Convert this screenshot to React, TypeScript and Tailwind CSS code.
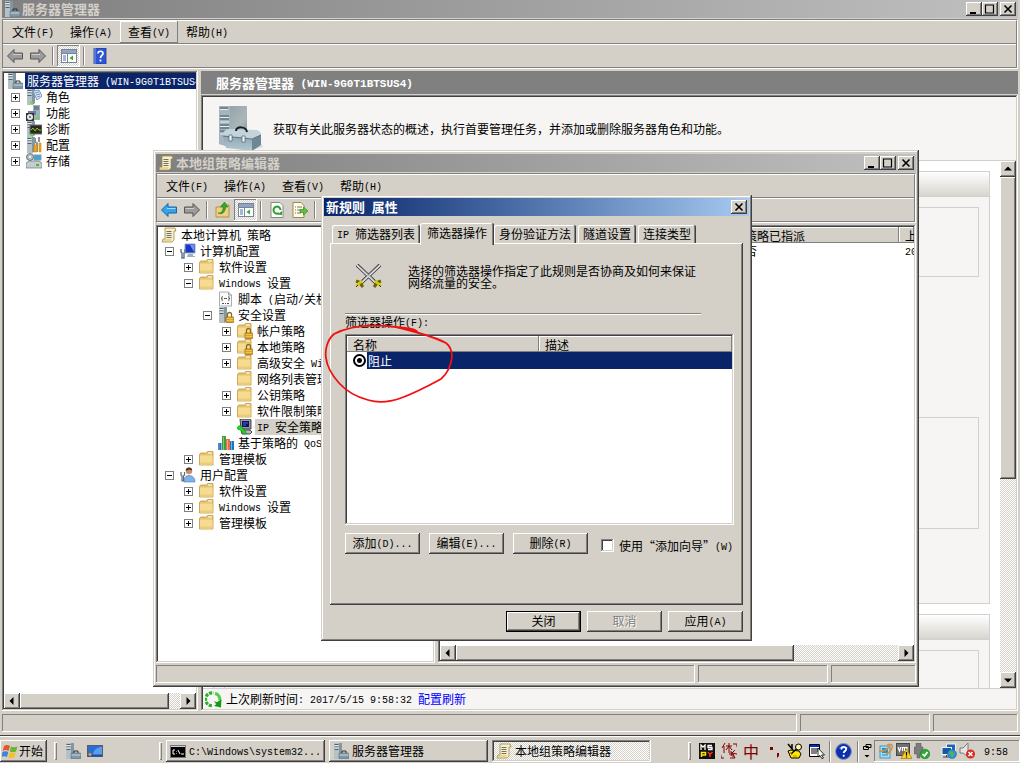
import type { ComponentType, ReactNode } from "react"
import { clsx } from "clsx"

const RAISED =
  "bg-[#d4d0c8] shadow-[inset_-1px_-1px_#404040,inset_1px_1px_#fff,inset_-2px_-2px_#808080]"
const FRAME =
  "bg-[#d4d0c8] shadow-[inset_-1px_-1px_#404040,inset_1px_1px_#d4d0c8,inset_-2px_-2px_#808080,inset_2px_2px_#fff]"
const SUNKEN =
  "p-[2px] shadow-[inset_-1px_-1px_#fff,inset_1px_1px_#808080,inset_-2px_-2px_#d4d0c8,inset_2px_2px_#404040]"
const THIN_SUNKEN = "shadow-[inset_-1px_-1px_#fff,inset_1px_1px_#808080]"
const DITHER =
  "bg-[repeating-conic-gradient(#fff_0_25%,#d4d0c8_0_50%)] bg-[length:2px_2px]"

// Half-width characters take exactly half the advance of the Chinese ones.
function Txt({ children, bold }: { children: string; bold?: boolean }) {
  return (
    <span className={clsx("whitespace-pre", bold && "text-[13px] font-bold")}>
      {children.split(/([\x20-\x7e]+)/).map((part, i) =>
        i % 2 ? (
          <span
            key={i}
            className={clsx(
              "align-[1px] leading-none font-['Liberation_Mono',monospace]",
              bold ? "text-[11px]" : "text-[10px]"
            )}
          >
            {part}
          </span>
        ) : (
          part
        )
      )}
    </span>
  )
}

/* ---------- icons ---------- */

function Svg({
  children,
  size = "size-4",
  box = "0 0 16 16",
}: {
  children: ReactNode
  size?: string
  box?: string
}) {
  return (
    <svg viewBox={box} className={clsx("shrink-0", size)} aria-hidden="true">
      {children}
    </svg>
  )
}

function Tower() {
  return (
    <>
      <path d="M1 0h8v14l-3 2H1z" fill="#b4c2c8" />
      <path d="M6 0h3v14l-3 2z" fill="#8497a0" />
      <path d="M1.500 1.500h4M1.500 4h4M1.500 6.500h4" stroke="#4c616b" />
      <path d="M1.500 2.500h4M1.500 5h4" stroke="#e4ecef" />
    </>
  )
}

function ServerIcon() {
  return (
    <Svg>
      <Tower />
      <rect x="6" y="10" width="10" height="6" rx="1" fill="#7f97a6" stroke="#566c79" strokeWidth=".6" />
      <path d="M6.500 12h9" stroke="#c9d8e0" />
      <path d="M9 10V8h4v2" fill="none" stroke="#333" />
    </Svg>
  )
}

function RolesIcon() {
  return (
    <Svg>
      <Tower />
      <rect x="4" y="12.500" width="3" height="2" fill="#5be22a" />
      <path d="M7 2l6-1 3 6-5 4z" fill="#dbe9f7" stroke="#7793b5" />
      <path d="M9 4l4-1M10 6l4-1M11 8l3-1" stroke="#6f93c4" />
    </Svg>
  )
}

function FeaturesIcon() {
  return (
    <Svg>
      <path d="M7 0h7v15H7z" fill="#9fb1ba" />
      <path d="M8 2h5M8 4h5" stroke="#3f525c" />
      <path d="M2 6h8v4H2z" fill="#6c7da8" />
      <rect x="0" y="8" width="8" height="8" fill="#333" />
      <circle cx="4" cy="12" r="3" fill="#e8e8e8" />
      <circle cx="4" cy="12" r="1" fill="#555" />
      <rect x="10" y="12" width="3" height="2" fill="#5be22a" />
    </Svg>
  )
}

function DiagnosticsIcon() {
  return (
    <Svg>
      <Tower />
      <rect x="4" y="4" width="12" height="9" fill="#2a2a20" stroke="#777" />
      <path d="M5 9l2-2 2 3 2-3 2 2h2" fill="none" stroke="#8ac926" />
      <rect x="4" y="13" width="3" height="2" fill="#5be22a" />
    </Svg>
  )
}

function ConfigIcon() {
  return (
    <Svg>
      <Tower />
      <path d="M9 1v4l2 1v9M13 0v5" stroke="#8d9499" strokeWidth="2" fill="none" />
      <path d="M8 8h3v7H8zM13 6h2v9h-2z" fill="#f3a712" stroke="#b9770a" strokeWidth=".5" />
    </Svg>
  )
}

function StorageIcon() {
  return (
    <Svg>
      <circle cx="4" cy="4" r="3.500" fill="#b4bcc0" stroke="#6b7478" />
      <circle cx="4" cy="4" r="1" fill="#fff" />
      <rect x="8" y="2" width="7" height="5" fill="#39a7d8" stroke="#8a979d" />
      <path d="M0 10l3-2h10l3 2v5H0z" fill="#c4ccd0" stroke="#6b7478" strokeWidth=".7" />
      <rect x="10" y="11" width="3" height="2" fill="#35c41a" />
    </Svg>
  )
}

function ScrollIcon() {
  return (
    <Svg>
      <path d="M4 1h10l1 3h-2v9l-2 2H1l1-3h2z" fill="#fbf0c4" stroke="#a08a4a" strokeWidth=".8" />
      <path d="M5.500 4.500h5M5.500 6.500h5M5.500 8.500h5M5.500 10.500h5" stroke="#6d6d80" />
      <path d="M1.500 13h9" stroke="#d6b65a" />
    </Svg>
  )
}

function FolderIcon({ lock }: { lock?: boolean }) {
  return (
    <Svg>
      <path d="M.5 3.500l1-1.500h6l1-1.500h5.500V14H.5z" fill="#e6c268" stroke="#c09a48" strokeWidth=".8" />
      <path d="M9 2h4" stroke="#fff" />
      <path d="M1 4.500h12.500v9H1z" fill="#f6dc92" />
      <path d="M1 11.500h12.500v2H1z" fill="#edcb78" />
      {lock && <Padlock />}
    </Svg>
  )
}

function Padlock() {
  return (
    <>
      <path d="M9.500 10V7.500a2 2 0 0 1 4 0V10" fill="none" stroke="#8a6c1c" strokeWidth="1.300" />
      <rect x="8" y="10" width="7.500" height="5.500" fill="#dfa520" stroke="#94690e" strokeWidth=".7" />
      <path d="M8.500 11.500h7M8.500 13.500h7" stroke="#f6d066" strokeWidth=".7" />
    </>
  )
}

function ComputerIcon() {
  return (
    <Svg>
      <path d="M5 1h10v9H5z" fill="#1737c8" stroke="#9aa6b8" />
      <path d="M10 2h4v7z" fill="#6e93f0" />
      <path d="M8 11h5v2h2v1H7z" fill="#a7adb5" />
      <path d="M1 6v3l1 1v5h2v-5l1-1V6" fill="none" stroke="#60788f" strokeWidth="1.500" />
    </Svg>
  )
}

function UserIcon() {
  return (
    <Svg>
      <circle cx="9" cy="4" r="3.200" fill="#c98f6a" />
      <path d="M5.800 4a3.200 3.200 0 0 1 6.400-.5L9 2.500z" fill="#4a3524" />
      <path d="M4 15c0-5 2-6.500 5-6.500s6 1.500 6 6.500z" fill="#7fb0e6" stroke="#4f7fb5" strokeWidth=".6" />
      <path d="M1 5v3l1 1v5h1.500V9l1-1V5" fill="none" stroke="#5a6b80" strokeWidth="1.200" />
    </Svg>
  )
}

function ScriptIcon() {
  return (
    <Svg>
      <path d="M1.500 1h9l3 3v11h-12z" fill="#fafafa" stroke="#999" strokeWidth=".8" />
      <path d="M10.500 1v3h3" fill="none" stroke="#999" />
      <path d="M4.500 5.500H4v2H3h1v2h.5M10.500 5.500h.5v2h1-1v2h-.5M6 7.500h3M4 12.500h2M7 12.500h1M9 12.500h2" fill="none" stroke="#555" />
    </Svg>
  )
}

function SecurityIcon() {
  return (
    <Svg>
      <Tower />
      <Padlock />
    </Svg>
  )
}

function IpSecIcon() {
  return (
    <Svg>
      <path d="M3 0h9l2 1v9H4z" fill="#9a9a9a" stroke="#222" strokeWidth=".8" />
      <rect x="5" y="2" width="7" height="6" fill="#10105c" />
      <path d="M6 4h5M6 6h3" stroke="#3a6df0" />
      <path d="M4 11h9l2 2-2 2H5z" fill="#b8b8b8" stroke="#222" strokeWidth=".8" />
      <path d="M0 8.500L2.500 6.500 4.500 8 9 13v2H7L3 10.500 1.500 11z" fill="#14e014" stroke="#067806" strokeWidth=".5" />
    </Svg>
  )
}

function QosIcon() {
  return (
    <Svg>
      <path d="M0 8h3.500v7H0z" fill="#1f6fc0" />
      <path d="M4 1h4v14H4z" fill="#3f9e35" />
      <path d="M8 4h4v11H8z" fill="#ee6e4c" />
      <path d="M12 6h4v9h-4z" fill="#1a79bd" />
      <path d="M1 8v7M5.500 2v13M9.500 5v10M13.500 6v9" stroke="#ffffff66" />
    </Svg>
  )
}

function ArrowIcon({ blue, flip }: { blue?: boolean; flip?: boolean }) {
  return (
    <Svg>
      <path
        d={flip ? "M15.500 8L9 1.500V5H.5v6H9v3.500z" : "M.5 8L7 1.500V5h8.500v6H7v3.500z"}
        fill={blue ? "#35a4ea" : "#9b9b9b"}
        stroke={blue ? "#1565a8" : "#555"}
      />
      <path
        d={flip ? "M1.500 6.500H10" : "M6 6.500h8.500"}
        stroke={blue ? "#a4dcff" : "#cfcfcf"}
      />
    </Svg>
  )
}

function PanelIcon() {
  return (
    <Svg>
      <rect x=".5" y="1.500" width="15" height="13" fill="#fff" stroke="#7a8494" />
      <path d="M1 2h14v3H1z" fill="#8fa4c4" />
      <path d="M1 5.500h14M6.500 6v8" stroke="#7a8494" />
      <path d="M2 8h3M2 10h3M2 12h3" stroke="#4a6fb0" />
      <path d="M12 7.500v5L8.500 10z" fill="#2fae2f" />
    </Svg>
  )
}

function HelpBookIcon() {
  return (
    <Svg>
      <path d="M2 0h12v16H2z" fill="#2d55d4" stroke="#1c3796" strokeWidth=".8" />
      <path d="M3 0v16" stroke="#7f9cf2" />
      <path d="M6 5.500C6 2.500 11 2.500 11 5.500 11 7.500 8.500 7.500 8.500 10M8.500 11.500v2" fill="none" stroke="#fff" strokeWidth="1.700" />
    </Svg>
  )
}

function UpFolderIcon() {
  return (
    <Svg>
      <path d="M1 5h5l1-2h7v12H1z" fill="#f0cf7d" stroke="#a8843a" strokeWidth=".8" />
      <path d="M3 11c4 0 5-2 5-6H5.500L9.500 0 13 5h-2.500c0 5-3 8-7.500 6z" fill="#35a82b" stroke="#1c6b17" strokeWidth=".5" />
    </Svg>
  )
}

function RefreshPageIcon() {
  return (
    <Svg>
      <path d="M2 .5h9l3 3v12H2z" fill="#fff" stroke="#888" />
      <path d="M11.500 8A3.500 3.500 0 1 0 10 11" fill="none" stroke="#2da02d" strokeWidth="2" />
      <path d="M8.500 12.500l4.500.5v-4z" fill="#2da02d" />
    </Svg>
  )
}

function ExportIcon() {
  return (
    <Svg>
      <path d="M1 .5h8l3 3v12H1z" fill="#fffbe6" stroke="#9a8a55" />
      <path d="M3 5h1M5 5h5M3 8h1M5 8h4M3 11h1M5 11h4" stroke="#777" />
      <path d="M8 7.500h3.500V5L16 9l-4.500 4v-2.500H8z" fill="#58c43c" stroke="#2a8418" strokeWidth=".6" />
    </Svg>
  )
}

function RefreshIcon() {
  return (
    <Svg size="size-[17px]">
      <path d="M9.500 2.200A6 6 0 0 1 13.900 9" fill="none" stroke="#4fcf4a" strokeWidth="3" />
      <path d="M6.500 13.800A6 6 0 1 1 8 2" fill="none" stroke="#2eaf2a" strokeWidth="3" strokeDasharray="3 1" />
      <path d="M8.500 9.500l2.500 1 4.500-2.500-.5 7.500L8.500 14l2-1.500z" fill="#119b14" />
    </Svg>
  )
}

function ToolboxServerIcon() {
  return (
    <Svg size="w-[46px] h-[46px]" box="0 0 46 46">
      <defs>
        <linearGradient id="tower" x1="0" x2="1" y2="1">
          <stop offset="0" stopColor="#8c9ba1" />
          <stop offset=".6" stopColor="#a9b7bb" />
          <stop offset="1" stopColor="#6f828a" />
        </linearGradient>
        <linearGradient id="front" y2="1" x2="0">
          <stop offset="0" stopColor="#8ea6b4" />
          <stop offset="1" stopColor="#b4c8d2" />
        </linearGradient>
      </defs>
      <ellipse cx="36" cy="41" rx="9" ry="3" fill="#dcdcdc" />
      <path d="M1 1h28v40l-14 2-14-4z" fill="url(#tower)" />
      <path d="M1 1h11v41L1 39z" fill="#a4b5bd" />
      <path d="M2 3h8M2 11h9M2 14h9M2 20h9M2 23h9M2 26h9" stroke="#40545e" />
      <path d="M2 4.500h8M2 12.500h9M2 17h9M2 21.500h9M2 29h9" stroke="#e6eef0" />
      <path d="M5 31l29 3v12L8 43z" fill="url(#front)" />
      <path d="M34 34l9-4v10l-9 6z" fill="#6e8795" />
      <path d="M5 31c0-4 2-7 6-7l26 1c4 0 6 2 6 5l-9 4z" fill="#c2d3db" />
      <path d="M5 31l29 3 9-4" fill="none" stroke="#5c727f" />
      <path d="M18 26c0-5 10-5 11 1" fill="none" stroke="#1c1c1c" strokeWidth="2" />
      <path d="M11 30h3v6h-3zM24 31h3v6h-3z" fill="#f2f5f6" stroke="#3d4f58" strokeWidth=".6" />
    </Svg>
  )
}

function SwordsIcon() {
  return (
    <Svg size="w-[27px] h-6" box="0 0 27 24">
      <path d="M2 1l19 18M25 1L6 19" stroke="#222" strokeWidth="3.600" />
      <path d="M2 1l19 18M25 1L6 19" stroke="#e2e2e2" strokeWidth="2.200" />
      <path d="M3 1l18 17M24 1L6 18" stroke="#777" strokeWidth=".7" />
      <path d="M1 17l3 1 4 5M26 17l-3 1-4 5" fill="none" stroke="#6b6400" strokeWidth="3" />
      <path d="M1 22l6-5M26 22l-6-5" stroke="#d6ca00" strokeWidth="2.600" />
      <path d="M1 23l2-2M26 23l-2-2" stroke="#333" />
    </Svg>
  )
}

function WindowsFlag() {
  return (
    <Svg>
      <path d="M2 3c2-1.500 4-1.500 6 0L6.500 8C5 6.800 3 6.800.8 8z" fill="#e8542a" />
      <path d="M9 3.500c2 1 4 1 6.500 0L14 8.500c-2 1-4.500 1-6.200 0z" fill="#69b52d" />
      <path d="M.5 9C3 7.800 5 8 6.300 9L5 14c-2-1.200-4-1-5.500 0z" fill="#3f84dc" />
      <path d="M7.500 9.500c2 1 4 1 6.200 0l-1.500 5c-2 1-4 1-6 0z" fill="#f8c022" />
    </Svg>
  )
}

function DesktopIcon() {
  return (
    <Svg>
      <rect x=".5" y="2.500" width="15" height="11" fill="#2a6fd0" stroke="#5b5b66" />
      <path d="M6 11c1-5 5-7 9-7v9H6z" fill="#5b9ef0" />
      <rect x="1" y="11.500" width="14" height="2" fill="#1c4ea8" />
      <circle cx="3" cy="11.500" r="1.500" fill="#f0a030" />
    </Svg>
  )
}

function ConsoleIcon() {
  return (
    <Svg>
      <rect x=".5" y="2.500" width="15" height="12" fill="#000" stroke="#777" />
      <path d="M1 3.500h14" stroke="#c8d0dc" />
      <path d="M5 7H3v4h2M6.500 8v.5M6.500 10.500v.5M8 7l2 4M11 11h3" fill="none" stroke="#fff" />
    </Svg>
  )
}

function MspyIcon() {
  return (
    <Svg>
      <rect width="16" height="16" fill="#111" />
      <path d="M2 7V2l2 2 2-2v5M13 2.500H9v2h4v2H9" fill="none" stroke="#fff" strokeWidth="1.300" />
      <path d="M2.500 14V9.500h4v2.500h-4" fill="none" stroke="#ffe800" strokeWidth="1.500" />
      <path d="M9 9l2 2.500L13.500 9M11 11.500V14" fill="none" stroke="#ff3020" strokeWidth="1.500" />
    </Svg>
  )
}

function PaintIcon() {
  return (
    <Svg>
      <path d="M1 1l5 6M5 1v5" stroke="#000" strokeWidth="1.500" />
      <path d="M1 8l3-1 8 1 2 3-2 4H4z" fill="#ffe800" stroke="#000" />
      <circle cx="11.500" cy="4" r="3" fill="#fff6b0" stroke="#000" />
      <path d="M9.500 6L4 11" stroke="#000" strokeWidth="1.500" />
      <path d="M6 13h4M3 9l2 3" stroke="#e07818" />
    </Svg>
  )
}

function MenuCursorIcon() {
  return (
    <Svg>
      <path d="M.5 1.500h10v12H.5z" fill="#fff" stroke="#000" />
      <path d="M1 3h9" stroke="#0028d8" strokeWidth="2" />
      <path d="M2 6h7M2 8h7M2 10h6" stroke="#000" />
      <path d="M9 5l6.500 7h-3l2 3-1.500.8-2-3.300L9 14z" fill="#fff" stroke="#000" strokeWidth=".8" />
    </Svg>
  )
}

function HelpBallIcon() {
  return (
    <Svg size="size-[17px]">
      <circle cx="8" cy="8" r="7.500" fill="#0c2fae" stroke="#8a96b8" />
      <path d="M3 5a6 4 0 0 1 10 0z" fill="#6a8cf0" />
      <path d="M6 6c0-3 4.500-3 4.500-.2C10.500 7.500 8.200 7.500 8.200 9.500M8.200 11v2" fill="none" stroke="#fff" strokeWidth="1.700" />
    </Svg>
  )
}

function GlobeFlagIcon() {
  return (
    <Svg>
      <rect x="2" y="3" width="10" height="12" fill="#a9dcf2" stroke="#3c9cc4" />
      <path d="M4 5h6v5H4z" fill="#1d94d0" />
      <path d="M4 12h6" stroke="#2b86b4" />
      <path d="M1 8c3 1 8-1 10-4M9 2c4-2 6 0 5 3-1 4-3 5-6 6" fill="none" stroke="#e58a32" strokeWidth="1.500" />
    </Svg>
  )
}

function VmIcon() {
  return (
    <Svg>
      <rect x=".5" y=".5" width="13" height="12" fill="#707070" stroke="#444" />
      <path d="M2 4l1.500 4L5 4M6.500 8V4.500h2V8M8.500 4.500h2.500V8" fill="none" stroke="#fff" strokeWidth="1.200" />
      <path d="M10.500 6l5.500 9.500H5z" fill="#ffd21c" stroke="#a67800" strokeWidth=".7" />
      <path d="M10.500 9v3.500M10.500 13.500v1" stroke="#000" strokeWidth="1.300" />
    </Svg>
  )
}

function SafeRemoveIcon() {
  return (
    <Svg>
      <path d="M2 0h5v4h2v7H6v4H3v-4H0V4h2z" fill="#7c7c7c" stroke="#555" strokeWidth=".5" />
      <circle cx="11" cy="11" r="4.800" fill="#2fa836" stroke="#16701b" strokeWidth=".5" />
      <path d="M8.500 11l2 2 3-4" fill="none" stroke="#fff" strokeWidth="1.700" />
    </Svg>
  )
}

function NetworkIcon() {
  return (
    <Svg>
      <rect x="5.500" y="1" width="9" height="7" fill="#1c66b8" stroke="#eef2f6" />
      <rect x="1" y="4.500" width="9.500" height="7" fill="#155a9f" stroke="#eef2f6" />
      <path d="M2 14h7M5.500 12v2" stroke="#444" />
      <circle cx="11" cy="11" r="4.500" fill="#2f8fe0" stroke="#1b5c98" strokeWidth=".5" />
      <path d="M9 8l3 1 1 3-2 3-1-3-2-2z" fill="#56b83c" />
    </Svg>
  )
}

function MutedIcon() {
  return (
    <Svg>
      <path d="M1 5h3l5-5v14l-5-4H1z" fill="#e4e4e4" stroke="#666" strokeWidth=".8" />
      <circle cx="11.500" cy="11" r="4.500" fill="#d92b22" />
      <path d="M9.500 9l4 4M13.500 9l-4 4" stroke="#fff" strokeWidth="1.500" />
    </Svg>
  )
}

/* ---------- shared window parts ---------- */

function CaptionButton({ kind }: { kind: "min" | "max" | "close" }) {
  const label = { min: "最小化", max: "最大化", close: "关闭窗口" }[kind]
  return (
    <button type="button" aria-label={label} className={clsx("h-[14px] w-4", RAISED)}>
      <svg viewBox="0 0 16 14" className="block h-[14px] w-4" aria-hidden="true">
        {kind === "min" && <path d="M4 11h6" stroke="#000" strokeWidth="2" />}
        {kind === "max" && (
          <path d="M3.500 3h8v8h-8zM3 3h9" fill="none" stroke="#000" strokeWidth="1.200" />
        )}
        {kind === "close" && (
          <path d="M4.500 3.500l7 7M11.500 3.500l-7 7" stroke="#000" strokeWidth="1.600" />
        )}
      </svg>
    </button>
  )
}

function TitleBar({
  title,
  icon,
  active,
}: {
  title: string
  icon?: ReactNode
  active?: boolean
}) {
  return (
    <div
      className={clsx(
        "flex h-[18px] shrink-0 items-center gap-[2px] bg-linear-to-r px-[2px]",
        active
          ? "from-[#0a246a] to-[#a6caf0] text-white"
          : "from-[#808080] to-[#c0c0c0] text-[#d4d0c8]"
      )}
    >
      {icon}
      <h2 className="flex-1">
        <Txt bold>{title}</Txt>
      </h2>
      <div className="flex">
        {!active && (
          <>
            <CaptionButton kind="min" />
            <CaptionButton kind="max" />
          </>
        )}
      </div>
      <CaptionButton kind="close" />
    </div>
  )
}

const MENUS = ["文件(F)", "操作(A)", "查看(V)", "帮助(H)"]

function MenuBar({ hot }: { hot?: string }) {
  return (
    <nav className="flex h-[23px] items-stretch border-b border-[#808080] pl-px">
      {MENUS.map((menu) => (
        <button
          key={menu}
          type="button"
          className={clsx(
            "w-[58px] shrink-0",
            menu === hot && "shadow-[inset_-1px_-1px_#808080,inset_1px_1px_#fff]"
          )}
        >
          <Txt>{menu}</Txt>
        </button>
      ))}
    </nav>
  )
}

function ToolButton({
  label,
  pressed,
  children,
}: {
  label: string
  pressed?: boolean
  children: ReactNode
}) {
  return (
    <button
      type="button"
      aria-label={label}
      className={clsx(
        "flex h-[22px] w-[23px] shrink-0 items-center justify-center",
        pressed && [DITHER, THIN_SUNKEN]
      )}
    >
      {children}
    </button>
  )
}

function ToolDivider() {
  return (
    <span className="mx-[3px] h-[18px] w-[2px] border-r border-l border-r-white border-l-[#808080]" />
  )
}

function Bars({ children }: { children: ReactNode }) {
  return (
    <div className="mt-px shrink-0 border border-[#808080] border-r-white border-b-white">
      <div className="border-t border-r border-b border-[#808080] border-t-white">
        {children}
      </div>
    </div>
  )
}

function ScrollArrow({ dir }: { dir: "left" | "right" | "up" | "down" }) {
  const paths = {
    left: "M9.500 4v8l-4-4z",
    right: "M6.500 4v8l4-4z",
    up: "M4 9.500h8l-4-4z",
    down: "M4 6.500h8l-4 4z",
  }
  const labels = { left: "向左", right: "向右", up: "向上", down: "向下" }
  return (
    <button type="button" aria-label={labels[dir]} className={clsx("size-4 shrink-0", RAISED)}>
      <Svg>
        <path d={paths[dir]} fill="#000" />
      </Svg>
    </button>
  )
}

function StatusBar() {
  return (
    <footer className="flex h-[18px] shrink-0 gap-[3px]">
      <div className={clsx("flex-1", THIN_SUNKEN)} />
      <div className={clsx("w-[130px]", THIN_SUNKEN)} />
      <div className={clsx("w-[85px]", THIN_SUNKEN)} />
    </footer>
  )
}

type TreeItem = {
  label: string
  icon: ComponentType
  level: 0 | 1 | 2 | 3 | 4
  state?: "open" | "closed"
  selected?: "active" | "inactive"
}

const INDENT = ["pl-[3px]", "pl-[7px]", "pl-[26px]", "pl-[45px]", "pl-[64px]"]

function Tree({ items }: { items: TreeItem[] }) {
  return (
    <ul className="flex flex-col">
      {items.map((item, i) => (
        <li key={i} className={clsx("flex h-4 items-center", INDENT[item.level])}>
          {item.level > 0 && (
            <span className="mr-[6px] size-[9px] shrink-0">
              {item.state && (
                <Svg size="block size-[9px]" box="0 0 9 9">
                  <rect x=".5" y=".5" width="8" height="8" fill="#fff" stroke="#808080" />
                  <path
                    d={item.state === "open" ? "M2 4.500h5" : "M2 4.500h5M4.500 2v5"}
                    stroke="#000"
                  />
                </Svg>
              )}
            </span>
          )}
          <item.icon />
          <span
            className={clsx(
              "ml-[2px] h-4 shrink-0 px-[2px] leading-4",
              item.selected === "active" && "bg-[#0a246a] text-white",
              item.selected === "inactive" && "bg-[#d4d0c8]"
            )}
          >
            <Txt>{item.label}</Txt>
          </span>
        </li>
      ))}
    </ul>
  )
}

/* ---------- server manager ---------- */

const SERVER_TREE: TreeItem[] = [
  { label: "服务器管理器 (WIN-9G0T1BTSUS4)", icon: ServerIcon, level: 0, selected: "active" },
  { label: "角色", icon: RolesIcon, level: 1, state: "closed" },
  { label: "功能", icon: FeaturesIcon, level: 1, state: "closed" },
  { label: "诊断", icon: DiagnosticsIcon, level: 1, state: "closed" },
  { label: "配置", icon: ConfigIcon, level: 1, state: "closed" },
  { label: "存储", icon: StorageIcon, level: 1, state: "closed" },
]

function SummaryCard({ boxes }: { boxes: string[] }) {
  return (
    <section className="shrink-0 border border-[#d0d0d0] bg-[#f6f5f4]">
      <div className="h-[25px] border-b border-[#d0d0d0] bg-linear-to-b from-white to-[#d8d5ce]" />
      <div className="flex flex-col px-[10px] pt-[10px]">
        {boxes.map((box) => (
          <div key={box} className={clsx("border border-[#d0d0d0]", box)} />
        ))}
      </div>
    </section>
  )
}

function ServerManager() {
  return (
    <section className="flex min-h-0 flex-1 flex-col border-b border-[#404040] bg-[#d4d0c8] px-[2px] pb-[3px]">
      <TitleBar title="服务器管理器" icon={<ServerIcon />} />
      <Bars>
        <MenuBar hot="查看(V)" />
        <div className="flex h-[23px] items-center border-t border-white">
          <ToolButton label="后退">
            <ArrowIcon />
          </ToolButton>
          <ToolButton label="前进">
            <ArrowIcon flip />
          </ToolButton>
          <ToolDivider />
          <ToolButton label="显示控制台树" pressed>
            <PanelIcon />
          </ToolButton>
          <ToolDivider />
          <ToolButton label="帮助">
            <HelpBookIcon />
          </ToolButton>
        </div>
      </Bars>
      <div className="mt-[2px] flex min-h-0 flex-1 gap-[3px]">
        <div className={clsx("flex w-[196px] shrink-0 flex-col bg-white", SUNKEN)}>
          <div className="min-h-0 flex-1 overflow-hidden">
            <Tree items={SERVER_TREE} />
          </div>
          <div className={clsx("flex h-4 shrink-0", DITHER)}>
            <ScrollArrow dir="left" />
            <div className={clsx("h-4 w-[149px]", RAISED)} />
            <span className="flex-1" />
            <ScrollArrow dir="right" />
          </div>
        </div>
        <div className="flex min-w-0 flex-1 flex-col">
          <h1 className="flex h-[23px] shrink-0 items-center bg-[#808080] pl-[15px] text-white">
            <Txt bold>服务器管理器 (WIN-9G0T1BTSUS4)</Txt>
          </h1>
          <div className={clsx("mt-px flex min-h-0 flex-1 flex-col bg-[#f6f5f4]", SUNKEN)}>
            <div className="flex h-[64px] shrink-0 items-start gap-[9px] border-b border-[#d0d0d0] pt-[8px] pl-[15px]">
              <ToolboxServerIcon />
              <p className="pt-[16px] leading-4">
                <Txt>获取有关此服务器状态的概述，执行首要管理任务，并添加或删除服务器角色和功能。</Txt>
              </p>
            </div>
            <div className="flex min-h-0 flex-1 bg-white">
              <div className="flex min-w-0 flex-1 flex-col gap-[10px] overflow-hidden px-[10px] pt-[10px]">
                <SummaryCard boxes={["h-[70px]", "mt-[140px] mb-[74px] h-[112px]"]} />
                <SummaryCard boxes={["h-[70px]"]} />
              </div>
              <div className={clsx("flex w-4 shrink-0 flex-col", DITHER)}>
                <ScrollArrow dir="up" />
                <div className={clsx("h-[302px]", RAISED)} />
                <span className="flex-1" />
                <ScrollArrow dir="down" />
              </div>
            </div>
            <div className="flex h-[21px] shrink-0 items-center gap-1 border-t border-[#d0d0d0] pl-[2px]">
              <RefreshIcon />
              <p>
                <Txt>上次刷新时间: 2017/5/15 9:58:32 </Txt>
                <a href="#refresh" className="text-[#0000ff]">
                  <Txt>配置刷新</Txt>
                </a>
              </p>
            </div>
          </div>
        </div>
      </div>
      <div className="mt-[3px]">
        <StatusBar />
      </div>
    </section>
  )
}

/* ---------- group policy editor ---------- */

const LockedFolder = () => <FolderIcon lock />

const POLICY_TREE: TreeItem[] = [
  { label: "本地计算机 策略", icon: ScrollIcon, level: 0 },
  { label: "计算机配置", icon: ComputerIcon, level: 1, state: "open" },
  { label: "软件设置", icon: FolderIcon, level: 2, state: "closed" },
  { label: "Windows 设置", icon: FolderIcon, level: 2, state: "open" },
  { label: "脚本 (启动/关机)", icon: ScriptIcon, level: 3 },
  { label: "安全设置", icon: SecurityIcon, level: 3, state: "open" },
  { label: "帐户策略", icon: LockedFolder, level: 4, state: "closed" },
  { label: "本地策略", icon: LockedFolder, level: 4, state: "closed" },
  { label: "高级安全 Windows 防火墙", icon: FolderIcon, level: 4, state: "closed" },
  { label: "网络列表管理器策略", icon: FolderIcon, level: 4 },
  { label: "公钥策略", icon: FolderIcon, level: 4, state: "closed" },
  { label: "软件限制策略", icon: FolderIcon, level: 4, state: "closed" },
  { label: "IP 安全策略", icon: IpSecIcon, level: 4, selected: "inactive" },
  { label: "基于策略的 QoS", icon: QosIcon, level: 3 },
  { label: "管理模板", icon: FolderIcon, level: 2, state: "closed" },
  { label: "用户配置", icon: UserIcon, level: 1, state: "open" },
  { label: "软件设置", icon: FolderIcon, level: 2, state: "closed" },
  { label: "Windows 设置", icon: FolderIcon, level: 2, state: "closed" },
  { label: "管理模板", icon: FolderIcon, level: 2, state: "closed" },
]

const HEAD_CELL =
  "overflow-hidden bg-[#d4d0c8] pl-[6px] text-left font-normal whitespace-nowrap shadow-[inset_-1px_-1px_#808080,inset_1px_1px_#fff]"

function PolicyEditor() {
  return (
    <section
      className={clsx(
        "absolute top-[150px] left-[153px] flex h-[537px] w-[766px] flex-col px-[3px] py-[4px]",
        FRAME
      )}
    >
      <TitleBar title="本地组策略编辑器" icon={<ScrollIcon />} />
      <Bars>
        <MenuBar />
        <div className="flex h-[23px] items-center border-t border-white">
          <ToolButton label="后退">
            <ArrowIcon blue />
          </ToolButton>
          <ToolButton label="前进">
            <ArrowIcon flip />
          </ToolButton>
          <ToolDivider />
          <ToolButton label="上一级">
            <UpFolderIcon />
          </ToolButton>
          <ToolButton label="显示控制台树" pressed>
            <PanelIcon />
          </ToolButton>
          <ToolDivider />
          <ToolButton label="刷新">
            <RefreshPageIcon />
          </ToolButton>
          <ToolButton label="导出列表">
            <ExportIcon />
          </ToolButton>
          <ToolDivider />
        </div>
      </Bars>
      <div className="mt-[2px] flex min-h-0 flex-1 gap-[3px]">
        <div className={clsx("w-[279px] shrink-0 overflow-hidden bg-white", SUNKEN)}>
          <Tree items={POLICY_TREE} />
        </div>
        <div className={clsx("flex min-w-0 flex-1 flex-col overflow-hidden bg-white", SUNKEN)}>
          <table className="w-full flex-none table-fixed border-collapse">
            <thead>
              <tr className="h-4 leading-[15px]">
                <th className={clsx(HEAD_CELL, "w-[150px]")} />
                <th className={clsx(HEAD_CELL, "w-[149px]")} />
                <th className={clsx(HEAD_CELL, "w-[160px]")}>
                  <Txt>策略已指派</Txt>
                </th>
                <th className={HEAD_CELL}>
                  <Txt>上</Txt>
                </th>
              </tr>
            </thead>
            <tbody>
              <tr className="h-4 leading-4">
                <td />
                <td />
                <td className="pl-[6px]">
                  <Txt>否</Txt>
                </td>
                <td className="overflow-hidden pl-[6px]">
                  <Txt>20</Txt>
                </td>
              </tr>
            </tbody>
          </table>
          <div className="flex-1" />
          <div className={clsx("flex h-4 shrink-0", DITHER)}>
            <ScrollArrow dir="left" />
            <div className={clsx("h-4 w-[338px]", RAISED)} />
            <span className="flex-1" />
            <ScrollArrow dir="right" />
          </div>
        </div>
      </div>
      <div className="mt-[2px]">
        <StatusBar />
      </div>
    </section>
  )
}

/* ---------- rule properties ---------- */

const TABS = ["IP 筛选器列表", "筛选器操作", "身份验证方法", "隧道设置", "连接类型"]

function PushButton({
  label,
  isDefault,
  disabled,
}: {
  label: string
  isDefault?: boolean
  disabled?: boolean
}) {
  return (
    <button
      type="button"
      disabled={disabled}
      className={clsx(
        "flex h-[21px] w-[75px] items-center justify-center pb-[2px]",
        isDefault
          ? "bg-[#d4d0c8] shadow-[inset_0_0_0_1px_#000,inset_-2px_-2px_#404040,inset_2px_2px_#fff,inset_-3px_-3px_#808080]"
          : RAISED,
        disabled && "text-[#808080] [text-shadow:1px_1px_#fff]"
      )}
    >
      <Txt>{label}</Txt>
    </button>
  )
}

function RuleDialog() {
  return (
    <section
      role="dialog"
      aria-label="新规则 属性"
      className={clsx(
        "absolute top-[195px] left-[321px] flex h-[446px] w-[431px] flex-col p-[3px]",
        FRAME
      )}
    >
      <TitleBar title="新规则 属性" active />
      <div className="flex min-h-0 flex-1 flex-col px-[6px] pt-[7px] pb-[6px]">
        <div role="tablist" className="flex h-[20px] shrink-0 items-end pl-[2px]">
          {TABS.map((tab, i) => (
            <button
              key={tab}
              type="button"
              role="tab"
              aria-selected={i === 1}
              className={clsx(
                "rounded-t-[2px] bg-[#d4d0c8] shadow-[inset_-1px_0_#404040,inset_1px_1px_#fff,inset_-2px_0_#808080]",
                i === 1
                  ? "relative z-10 -mb-[2px] h-[22px] px-[7px] pb-[2px]"
                  : "h-[18px] px-[5px]",
                i > 2 && "ml-[2px]"
              )}
            >
              <Txt>{tab}</Txt>
            </button>
          ))}
        </div>
        <div role="tabpanel" className={clsx("flex-1 pr-[9px] pl-[15px]", RAISED)}>
          <div className="flex gap-[26px] pt-[21px] pl-[10px]">
            <SwordsIcon />
            <p className="w-[290px] pt-px leading-3">
              <Txt>选择的筛选器操作指定了此规则是否协商及如何来保证</Txt>
              <br />
              <Txt>网络流量的安全。</Txt>
            </p>
          </div>
          <hr className="mt-[24px] mr-[33px] h-[2px] border-t border-b border-t-[#808080] border-b-white" />
          <h3 id="actions" className="mt-px h-3 leading-3">
            <Txt>筛选器操作(F):</Txt>
          </h3>
          <div className={clsx("mt-[6px] h-[191px] bg-white", SUNKEN)}>
            <table aria-labelledby="actions" className="w-full table-fixed border-collapse">
              <thead>
                <tr className="h-4 leading-[15px]">
                  <th className={clsx(HEAD_CELL, "w-[192px]")}>
                    <Txt>名称</Txt>
                  </th>
                  <th className={HEAD_CELL}>
                    <Txt>描述</Txt>
                  </th>
                </tr>
              </thead>
              <tbody>
                <tr className="h-[17px] leading-[17px]">
                  <td colSpan={2}>
                    <label className="flex h-[17px] items-center pl-[6px]">
                      <input
                        type="radio"
                        name="action"
                        defaultChecked
                        className="mr-px size-[13px] shrink-0 appearance-none rounded-full border-2 border-black bg-[radial-gradient(circle,#000_0_2px,#fff_3px)]"
                      />
                      <span className="flex-1 bg-[#0a246a] pl-px text-white">
                        <Txt>阻止</Txt>
                      </span>
                    </label>
                  </td>
                </tr>
              </tbody>
            </table>
          </div>
          <div className="mt-[8px] flex gap-[9px]">
            <PushButton label="添加(D)..." />
            <PushButton label="编辑(E)..." />
            <PushButton label="删除(R)" />
            <label className="mt-[4px] ml-1 flex items-center gap-[5px]">
              <input
                type="checkbox"
                className={clsx("size-[13px] shrink-0 appearance-none bg-white", SUNKEN)}
              />
              <Txt>使用“添加向导”(W)</Txt>
            </label>
          </div>
        </div>
        <div className="mt-[6px] flex shrink-0 justify-end gap-[6px]">
          <PushButton label="关闭" isDefault />
          <PushButton label="取消" disabled />
          <PushButton label="应用(A)" />
        </div>
      </div>
    </section>
  )
}

function RedMarker() {
  return (
    <svg
      viewBox="0 0 130 80"
      className="pointer-events-none absolute top-[324px] left-[324px] h-[80px] w-[130px]"
      aria-hidden="true"
    >
      <path
        d="M94 9C93 5 84 4 72 3 48 0 25 2 10 10 2 17 1 28 2 34 3 43 7 50 15 59 23 68 33 73 44 76 54 79 66 78 77 74 91 69 106 61 117 55 124 49 127 41 128 33 128 26 126 22 122 19 110 13 93 8 72 3"
        fill="none"
        stroke="#f01010"
        strokeWidth="1.800"
      />
    </svg>
  )
}

/* ---------- taskbar ---------- */

function TaskButton({
  label,
  icon,
  pressed,
}: {
  label: string
  icon: ReactNode
  pressed?: boolean
}) {
  return (
    <button
      type="button"
      className={clsx(
        "flex h-[22px] w-[159px] items-center gap-[3px] pl-[4px]",
        pressed ? [DITHER, SUNKEN] : RAISED
      )}
    >
      {icon}
      <Txt>{label}</Txt>
    </button>
  )
}

function Grip() {
  return (
    <span className="h-[18px] w-[3px] shrink-0 shadow-[inset_1px_1px_#fff,inset_-1px_-1px_#808080]" />
  )
}

function Taskbar() {
  return (
    <footer className="flex h-[27px] shrink-0 items-start border-t border-white bg-[#d4d0c8] pt-[3px]">
      <button type="button" className={clsx("flex h-[22px] w-[47px] items-center gap-[1px] pl-[2px]", RAISED)}>
        <WindowsFlag />
        <Txt>开始</Txt>
      </button>
      <div className="flex h-[22px] w-[119px] items-center pl-[7px]">
        <Grip />
        <span className="ml-[8px] flex gap-[6px]">
          <ServerIcon />
          <DesktopIcon />
        </span>
        <span className="mr-[4px] ml-auto flex">
          <Grip />
        </span>
      </div>
      <div className="flex gap-[4px]">
        <TaskButton label="C:\Windows\system32..." icon={<ConsoleIcon />} />
        <TaskButton label="服务器管理器" icon={<ServerIcon />} />
        <TaskButton label="本地组策略编辑器" icon={<ScrollIcon />} pressed />
      </div>
      <div className="ml-auto flex h-[22px] items-center">
        <Grip />
        <div className="ml-[8px] flex items-center gap-[6px] text-[16px] leading-4 text-[#800000]">
          <MspyIcon />
          <Svg>
            <path
              d="M4 0L1 5M3 3v7M5 3h6M8 0v8M8 3L5 7M8 3l3 4M12 1h4v3M0 12v3h3M7 9h4l-1 4M8 11h4v3M14 7l-3 3 5 1M9 15h5M12 11l2 4"
              fill="none"
              stroke="#800000"
            />
          </Svg>
          <span className="w-4">中</span>
          <Svg>
            <path d="M5 4h3v3H5zM12 10h2v3l-2 2z" fill="#800000" />
          </Svg>
          <PaintIcon />
          <MenuCursorIcon />
        </div>
        <span className="mr-[4px] ml-[4px] h-[21px] w-[2px] border-r border-l border-r-white border-l-[#808080]" />
        <HelpBallIcon />
        <span className="mr-[4px] ml-[5px] h-[21px] w-[2px] border-r border-l border-r-white border-l-[#808080]" />
        <Svg size="w-[9px] h-4" box="0 0 9 16">
          <path d="M3 1.500h5v3H3zM.5 3.500h5v3h-5z" fill="#d4d0c8" stroke="#000" />
          <path d="M1.500 12h5L4 14.500z" fill="#000" />
        </Svg>
        <div className={clsx("ml-[2px] flex h-[22px] w-[146px] items-center pr-[12px] pl-[4px]", THIN_SUNKEN)}>
          <div className="flex gap-[2px]">
            <GlobeFlagIcon />
            <VmIcon />
            <SafeRemoveIcon />
          </div>
          <div className="ml-[11px] flex gap-[2px]">
            <NetworkIcon />
            <MutedIcon />
          </div>
          <span className="ml-auto">
            <Txt>9:58</Txt>
          </span>
        </div>
      </div>
    </footer>
  )
}

export default function App() {
  return (
    <div className="relative flex h-screen w-full flex-col overflow-hidden bg-[#d4d0c8] font-['Noto_Sans_CJK_SC',sans-serif] text-[12px] leading-4 text-black">
      <ServerManager />
      <Taskbar />
      <PolicyEditor />
      <RuleDialog />
      <RedMarker />
    </div>
  )
}
